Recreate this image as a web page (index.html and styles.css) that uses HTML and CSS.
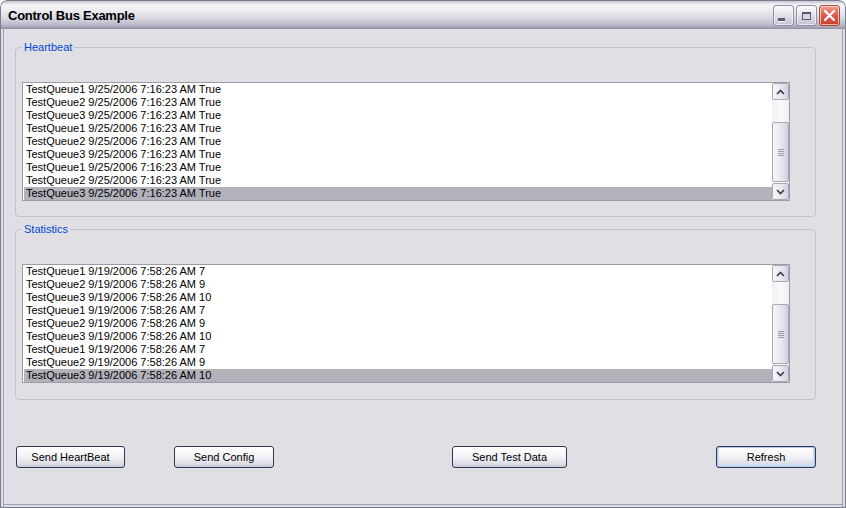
FILE: index.html
```html
<!DOCTYPE html>
<html>
    <head>
        <title>Control Bus Example</title>
        <link rel="stylesheet" href="styles.css">
    </head>
    <body>
        <div class="window">
            <div class="titlebar">
                <span class="title">Control Bus Example</span>
                <div class="caption-buttons">
                    <span class="cap-btn minimize"><i></i></span>
                    <span class="cap-btn maximize"><i></i></span>
                    <span class="cap-btn close">
                        <svg width="13" height="13" viewBox="0 0 13 13">
                            <path d="M2 2 L11 11 M11 2 L2 11" stroke="#fff" stroke-width="2.2" stroke-linecap="round"/>
                        </svg>
                    </span>
                </div>
            </div>

            <div class="client">
                <fieldset class="group">
                    <legend>Heartbeat</legend>
                    <div class="listbox">
                        <ul class="rows">
                            <li>TestQueue1 9/25/2006 7:16:23 AM True</li>
                            <li>TestQueue2 9/25/2006 7:16:23 AM True</li>
                            <li>TestQueue3 9/25/2006 7:16:23 AM True</li>
                            <li>TestQueue1 9/25/2006 7:16:23 AM True</li>
                            <li>TestQueue2 9/25/2006 7:16:23 AM True</li>
                            <li>TestQueue3 9/25/2006 7:16:23 AM True</li>
                            <li>TestQueue1 9/25/2006 7:16:23 AM True</li>
                            <li>TestQueue2 9/25/2006 7:16:23 AM True</li>
                            <li class="selected">TestQueue3 9/25/2006 7:16:23 AM True</li>
                        </ul>
                        <div class="scrollbar">
                            <span class="arrow up"><svg width="9" height="6" viewBox="0 0 9 6"><path d="M1 5 L4.5 1.5 L8 5" fill="none" stroke="#3c3c48" stroke-width="1.6"/></svg></span>
                            <div class="track">
                                <span class="thumb"><i></i><i></i><i></i><i></i></span>
                            </div>
                            <span class="arrow down"><svg width="9" height="6" viewBox="0 0 9 6"><path d="M1 1 L4.5 4.5 L8 1" fill="none" stroke="#3c3c48" stroke-width="1.6"/></svg></span>
                        </div>
                    </div>
                </fieldset>

                <fieldset class="group stats">
                    <legend>Statistics</legend>
                    <div class="listbox">
                        <ul class="rows">
                            <li>TestQueue1 9/19/2006 7:58:26 AM 7</li>
                            <li>TestQueue2 9/19/2006 7:58:26 AM 9</li>
                            <li>TestQueue3 9/19/2006 7:58:26 AM 10</li>
                            <li>TestQueue1 9/19/2006 7:58:26 AM 7</li>
                            <li>TestQueue2 9/19/2006 7:58:26 AM 9</li>
                            <li>TestQueue3 9/19/2006 7:58:26 AM 10</li>
                            <li>TestQueue1 9/19/2006 7:58:26 AM 7</li>
                            <li>TestQueue2 9/19/2006 7:58:26 AM 9</li>
                            <li class="selected">TestQueue3 9/19/2006 7:58:26 AM 10</li>
                        </ul>
                        <div class="scrollbar">
                            <span class="arrow up"><svg width="9" height="6" viewBox="0 0 9 6"><path d="M1 5 L4.5 1.5 L8 5" fill="none" stroke="#3c3c48" stroke-width="1.6"/></svg></span>
                            <div class="track">
                                <span class="thumb"><i></i><i></i><i></i><i></i></span>
                            </div>
                            <span class="arrow down"><svg width="9" height="6" viewBox="0 0 9 6"><path d="M1 1 L4.5 4.5 L8 1" fill="none" stroke="#3c3c48" stroke-width="1.6"/></svg></span>
                        </div>
                    </div>
                </fieldset>

                <div class="actions">
                    <button class="btn btn-heartbeat">Send HeartBeat</button>
                    <button class="btn btn-config">Send Config</button>
                    <button class="btn btn-testdata">Send Test Data</button>
                    <button class="btn btn-refresh default">Refresh</button>
                </div>
            </div>
        </div>
    </body>
</html>
```

FILE: styles.css
```css
body {
  margin: 0;
  padding: 0;
  background: #fff;
  font-family: 'Liberation Sans', Arial, sans-serif;
  font-size: 11px;
  color: #000;
}

.window {
  width: 846px;
  height: 508px;
  display: flex;
  flex-direction: column;
  overflow: hidden;
  border-radius: 7px 7px 0 0;
}

/* title bar */
.titlebar {
  height: 29px;
  flex: none;
  display: flex;
  align-items: flex-start;
  box-sizing: border-box;
  padding: 0 5px 0 7px;
  border: 1px solid #7c7c90;
  border-bottom: none;
  border-radius: 7px 7px 0 0;
  background: linear-gradient(#c4c4cf 0, #f7f7fa 4px, #ebebf0 10px, #d6d6df 18px, #b9b9c8 24px, #9d9db0 27px, #8a8a9c 28px);
}

.title {
  font-weight: bold;
  font-size: 13px;
  letter-spacing: -0.25px;
  line-height: 16px;
  margin-top: 7px;
  color: #000;
}

.caption-buttons {
  margin-left: auto;
  margin-top: 4px;
  display: flex;
  gap: 2px;
}

.cap-btn {
  width: 21px;
  height: 21px;
  box-sizing: border-box;
  border: 1px solid #8d8da3;
  border-radius: 3px;
  background: linear-gradient(#fbfbfd, #dedee8 55%, #c2c2d2);
  box-shadow: inset 0 0 0 1px rgba(255, 255, 255, 0.6);
  display: flex;
  align-items: center;
  justify-content: center;
}

.minimize i {
  width: 7px;
  height: 3px;
  background: #5a5a72;
  margin: 8px 5px 0 0;
  box-shadow: 0 1px 0 #fff;
}

.maximize i {
  width: 9px;
  height: 8px;
  box-sizing: border-box;
  border: 1px solid #5a5a72;
  border-top-width: 2px;
  background: #d8d8e2;
}

.close {
  border-color: #a84a3e;
  background: linear-gradient(#f0a090, #dd5a48 50%, #c8402e);
}

/* client area */
.client {
  flex: 1;
  background: #e0dfe3;
  border: 1px solid #7c7c90;
  border-top: none;
  box-shadow: inset 2px 0 #dcdce4, inset 3px 0 #a3a3b4,
              inset -2px 0 #dcdce4, inset -3px 0 #a3a3b4,
              inset 0 -2px #dcdce4, inset 0 -3px #a3a3b4;
  padding: 12px 0 0 14px;
}

.group {
  width: 801px;
  box-sizing: border-box;
  margin: 0;
  padding: 28px 6px 15px 6px;
  border: 1px solid #c3c3cd;
  border-radius: 4px;
}

.group legend {
  color: #0046d5;
  padding: 0 2px;
  line-height: 13px;
}

.stats {
  margin-top: 6px;
  padding-top: 28px;
  padding-bottom: 16px;
}

/* list box */
.listbox {
  width: 768px;
  height: 119px;
  box-sizing: border-box;
  border: 1px solid #9b9baa;
  background: #fff;
  display: flex;
}

.rows {
  list-style: none;
  margin: 0;
  padding: 0 0 0 1px;
  flex: 1;
}

.rows li {
  height: 13px;
  line-height: 13px;
  padding-left: 2px;
  white-space: nowrap;
}

.rows li.selected {
  background: #b2b2bb;
}

.scrollbar {
  width: 17px;
  display: flex;
  flex-direction: column;
  background: #f4f4f6;
}

.arrow {
  height: 17px;
  flex: none;
  box-sizing: border-box;
  border: 1px solid #a7a7b8;
  border-radius: 2px;
  background: linear-gradient(90deg, #f6f6f9, #e6e6ee 60%, #d2d2de);
  display: flex;
  align-items: center;
  justify-content: center;
}

.track {
  flex: 1;
  display: flex;
  flex-direction: column;
  justify-content: flex-end;
  padding-bottom: 1px;
  background: linear-gradient(90deg, #f0f0f4, #fbfbfc 50%, #eeeef2);
}

.thumb {
  height: 60px;
  box-sizing: border-box;
  border: 1px solid #a7a7b8;
  border-radius: 2px;
  background: linear-gradient(90deg, #f6f6f9, #e4e4ec 60%, #d0d0dc);
  display: flex;
  flex-direction: column;
  align-items: center;
  justify-content: center;
  gap: 1px;
}

.thumb i {
  width: 6px;
  height: 1px;
  background: #9a9aac;
}

/* buttons */
.actions {
  margin-top: 46px;
  margin-left: 1px;
  display: flex;
}

.btn {
  height: 22px;
  box-sizing: border-box;
  padding: 0;
  border: 1px solid #2c3a58;
  border-radius: 3px;
  background: linear-gradient(#ffffff, #f2f2f6 50%, #dcdce6 85%, #c8c8d6);
  font-family: 'Liberation Sans', Arial, sans-serif;
  font-size: 11px;
  color: #000;
}

.btn-heartbeat { width: 109px; }
.btn-config { width: 100px; margin-left: 49px; }
.btn-testdata { width: 115px; margin-left: 178px; }
.btn-refresh { width: 100px; margin-left: 149px; }

.default {
  box-shadow: inset 0 0 0 1px #b8c8ec, inset 0 -1px 0 2px #d0dcf4;
}
```
